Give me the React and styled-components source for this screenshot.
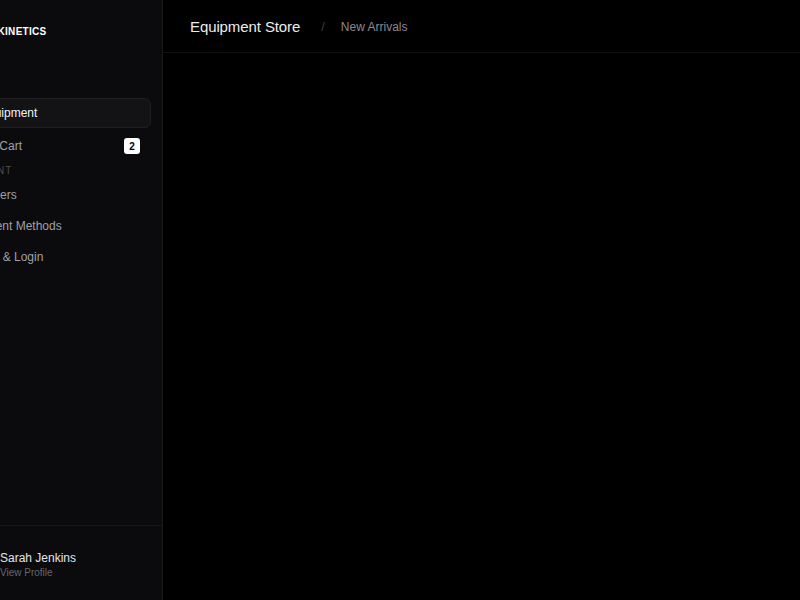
import React from "react";
import styled, { createGlobalStyle } from "styled-components";
import { Dumbbell, ShoppingCart, Package, CreditCard, ShieldCheck } from "lucide-react";

const Global = createGlobalStyle`
  html, body { margin: 0; padding: 0; background: #000; }
  body { font-family: "Liberation Sans", Arial, sans-serif; }
  * { box-sizing: border-box; }
`;

const Shell = styled.div`
  display: flex;
  width: 800px;
  height: 600px;
  overflow: hidden;
  background: #000;
`;

const Sidebar = styled.aside`
  flex-shrink: 0;
  width: 235px;
  margin-left: -72px;
  height: 100%;
  background: #0b0b0d;
  border-right: 1px solid #19191c;
  display: flex;
  flex-direction: column;
`;

const Brand = styled.div`
  height: 62px;
  display: flex;
  align-items: center;
  gap: 8px;
  padding-left: 12px;
  font-size: 10px;
  font-weight: 700;
  letter-spacing: 0.3px;
  color: #fff;
`;

const LogoMark = styled.div`
  width: 18px;
  height: 18px;
  border-radius: 4px;
  background: #fff;
`;

const Nav = styled.nav`
  display: flex;
  flex-direction: column;
  gap: ${(p) => p.$gap}px;
  padding: 0 11px 0 12px;
  margin-top: ${(p) => p.$top || 0}px;
`;

const Item = styled.div`
  height: 30px;
  display: flex;
  align-items: center;
  gap: 11px;
  padding: 0 10px 0 12px;
  border-radius: 6px;
  font-size: 12px;
  color: ${(p) => (p.$active ? "#f2f2f2" : "#a0a0a4")};
  background: ${(p) => (p.$active ? "#131315" : "transparent")};
  border: 1px solid ${(p) => (p.$active ? "#1f1f22" : "transparent")};
  svg { flex-shrink: 0; }
`;

const Label = styled.span`
  flex: 1;
  white-space: nowrap;
  margin-left: ${(p) => p.$nudge || 0}px;
`;

const Badge = styled.span`
  width: 16px;
  height: 16px;
  border-radius: 3px;
  background: #fff;
  color: #000;
  font-size: 10px;
  font-weight: 700;
  display: flex;
  align-items: center;
  justify-content: center;
`;

const Section = styled.div`
  height: 19px;
  display: flex;
  align-items: center;
  padding: 0 29px;
  font-size: 10px;
  letter-spacing: 0.8px;
  color: #4e4e52;
  white-space: nowrap;
`;

const Spacer = styled.div`
  flex: 1;
`;

const Footer = styled.div`
  border-top: 1px solid #17171a;
  height: 75px;
  display: flex;
  align-items: center;
  gap: 12px;
  padding: 0 20px 2px;
`;

const Avatar = styled.div`
  width: 40px;
  height: 40px;
  border-radius: 50%;
  background: #2a2a2e;
  flex-shrink: 0;
`;

const UserText = styled.div`
  display: flex;
  flex-direction: column;
  gap: 2px;
  margin-top: 4px;
`;

const UserName = styled.span`
  font-size: 12px;
  color: #e4e4e6;
  white-space: nowrap;
`;

const UserSub = styled.span`
  font-size: 10px;
  color: #66666a;
  white-space: nowrap;
`;

const Main = styled.main`
  flex: 1;
  display: flex;
  flex-direction: column;
  background: #000;
`;

const Header = styled.header`
  height: 53px;
  border-bottom: 1px solid #111113;
  display: flex;
  align-items: center;
  padding: 0 27px;
`;

const Title = styled.h1`
  margin: 0;
  font-size: 15px;
  font-weight: 400;
  letter-spacing: -0.1px;
  color: #ececec;
`;

const Slash = styled.span`
  margin: 1px 16px 0 21px;
  font-size: 13px;
  color: #3e3e42;
`;

const Crumb = styled.span`
  margin-top: 1px;
  font-size: 12px;
  color: #8a8a8e;
`;

export default function App() {
  return (
    <>
      <Global />
      <Shell>
        <Sidebar>
          <Brand>
            <LogoMark />
            APEX KINETICS
          </Brand>
          <Nav $gap={3} $top={36}>
            <Item $active>
              <Dumbbell size={16} />
              <Label>Equipment</Label>
            </Item>
            <Item>
              <ShoppingCart size={16} />
              <Label>My Cart</Label>
              <Badge>2</Badge>
            </Item>
          </Nav>
          <Section>ACCOUNT</Section>
          <Nav $gap={1}>
            <Item>
              <Package size={16} />
              <Label>Orders</Label>
            </Item>
            <Item>
              <CreditCard size={16} />
              <Label $nudge={-15}>Payment Methods</Label>
            </Item>
            <Item>
              <ShieldCheck size={16} />
              <Label $nudge={-24}>Security &amp; Login</Label>
            </Item>
          </Nav>
          <Spacer />
          <Footer>
            <Avatar />
            <UserText>
              <UserName>Sarah Jenkins</UserName>
              <UserSub>View Profile</UserSub>
            </UserText>
          </Footer>
        </Sidebar>
        <Main>
          <Header>
            <Title>Equipment Store</Title>
            <Slash>/</Slash>
            <Crumb>New Arrivals</Crumb>
          </Header>
        </Main>
      </Shell>
    </>
  );
}
